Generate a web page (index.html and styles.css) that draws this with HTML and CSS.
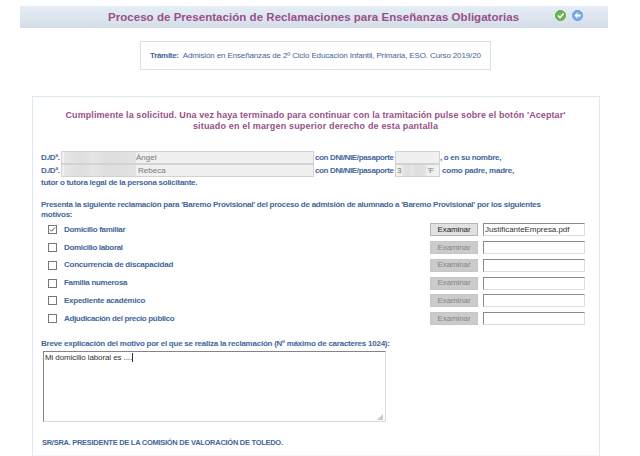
FILE: index.html
```html
<!DOCTYPE html>
<html lang="es">
<head>
    <meta charset="UTF-8">
    <meta name="viewport" content="width=device-width, initial-scale=1.0">
    <title>Reclamaciones</title>
    <link rel="stylesheet" href="styles.css">
</head>
<body>
    <header class="header">
        <h1>Proceso de Presentación de Reclamaciones para Enseñanzas Obligatorias</h1>
        <div class="header-actions">
            <svg width="11" height="11" viewBox="0 0 22 22">
                <circle cx="11" cy="11" r="10" fill="#6db356" stroke="#5fa54c" stroke-width="2"/>
                <path d="M6 11l4 4 7-8" fill="none" stroke="#fff" stroke-width="3.4"/>
            </svg>
            <svg width="11" height="11" viewBox="0 0 22 22">
                <circle cx="11" cy="11" r="10" fill="#79aeee" stroke="#6397dc" stroke-width="2"/>
                <path d="M5 11l6-6v4h6v4h-6v4z" fill="#fff"/>
            </svg>
        </div>
    </header>
    <div class="tramite"><b>Trámite:</b><span>Admisión en Enseñanzas de 2º Ciclo Educación Infantil, Primaria, ESO. Curso 2019/20</span></div>

    <form class="panel">
        <h2><span class="intro-1">Cumplimente la solicitud. Una vez haya terminado para continuar con la tramitación pulse sobre el botón 'Aceptar'</span><span class="intro-2">situado en el margen superior derecho de esta pantalla</span></h2>

        <div class="person">
            <span class="treat">D./Dª.</span>
            <div class="field name"><i class="mask"></i><span>Ángel</span></div>
            <span class="dni-label">con DNI/NIE/pasaporte</span>
            <div class="field dni"></div>
            <span class="after-1">, o en su nombre,</span>
        </div>
        <div class="person">
            <span class="treat">D./Dª.</span>
            <div class="field name second"><i class="mask"></i><span>Rebeca</span></div>
            <span class="dni-label">con DNI/NIE/pasaporte</span>
            <div class="field dni">3<i class="mask"></i>'F</div>
            <span class="after-2">como padre, madre,</span>
        </div>
        <p class="tutor">tutor o tutora legal de la persona solicitante.</p>
        <p class="presenta">Presenta la siguiente reclamación para 'Baremo Provisional' del proceso de admisión de alumnado a 'Baremo Provisional' por los siguientes<br>motivos:</p>

        <div class="reasons">
            <div class="reason">
                <svg class="check" viewBox="0 0 7 7"><path d="M1 3.5l1.7 1.7L6 1.5" fill="none" stroke="#444" stroke-width=".9"/></svg>
                <span class="r1">Domicilio familiar</span>
                <button type="button">Examinar</button>
                <div class="file">JustificanteEmpresa.pdf</div>
            </div>
            <div class="reason">
                <svg class="check"></svg>
                <span class="r2">Domicilio laboral</span>
                <button type="button" disabled>Examinar</button>
                <div class="file"></div>
            </div>
            <div class="reason">
                <svg class="check"></svg>
                <span class="r3">Concurrencia de discapacidad</span>
                <button type="button" disabled>Examinar</button>
                <div class="file"></div>
            </div>
            <div class="reason">
                <svg class="check"></svg>
                <span class="r4">Familia numerosa</span>
                <button type="button" disabled>Examinar</button>
                <div class="file"></div>
            </div>
            <div class="reason">
                <svg class="check"></svg>
                <span class="r5">Expediente académico</span>
                <button type="button" disabled>Examinar</button>
                <div class="file"></div>
            </div>
            <div class="reason">
                <svg class="check"></svg>
                <span class="r6">Adjudicación del precio público</span>
                <button type="button" disabled>Examinar</button>
                <div class="file"></div>
            </div>
        </div>

        <p class="explain">Breve explicación del motivo por el que se realiza la reclamación (Nº máximo de caracteres 1024):</p>
        <div class="textarea">
            <span>Mi domicilio laboral es ....</span><i class="caret"></i>
            <svg class="grip" width="6" height="6" viewBox="0 0 6 6"><path d="M6 0v6H0z" fill="#c9c9c9"/></svg>
        </div>
        <p class="president">SR/SRA. PRESIDENTE DE LA COMISIÓN DE VALORACIÓN DE TOLEDO.</p>
    </form>
</body>
</html>
```
FILE: styles.css
```css
* {
    box-sizing: border-box;
}
body {
    margin: 0;
    padding: 6px 32px 0 20px;
    height: 456px;
    overflow: hidden;
    background-color: #fff;
    font-family: "Liberation Sans", Arial, sans-serif;
    font-size: 8px;
    line-height: 10px;
    color: #45659a;
    white-space: nowrap;
}
h1, h2, p {
    margin: 0;
}
.header {
    display: flex;
    align-items: center;
    height: 22px;
    padding-left: 88px;
    background: linear-gradient(#e5edf6, #d5dde7);
}
.header h1 {
    width: 447px;
    font-size: 11.5px;
    line-height: 14px;
    letter-spacing: 0.04px;
    color: #985089;
}
.header-actions {
    display: flex;
    gap: 6px;
    margin-top: -3px;
}
.tramite {
    display: flex;
    align-items: center;
    gap: 4px;
    width: 351px;
    height: 29px;
    margin: 13px 0 0 120px;
    padding-left: 9px;
    border: 1px solid #d3e0ec;
    letter-spacing: -0.13px;
}
.tramite b {
    letter-spacing: -0.3px;
}
.panel {
    width: 568px;
    height: 360px;
    margin: 26px 0 0 12px;
    padding: 13px 0 0 8px;
    border: 1px solid #dde8f1;
    border-bottom-color: #f4f7fa;
}
h2 {
    display: flex;
    flex-direction: column;
    align-items: center;
    width: 549px;
    margin-bottom: 19px;
    font-size: 9px;
    line-height: 11px;
    color: #985089;
}
.intro-1 {
    letter-spacing: 0.09px;
}
.intro-2 {
    letter-spacing: 0.17px;
}
.person {
    display: flex;
    align-items: center;
    height: 13px;
    font-weight: bold;
    letter-spacing: -0.3px;
}
.treat {
    width: 20px;
    letter-spacing: -0.45px;
}
.field {
    display: flex;
    align-items: center;
    height: 13px;
    border: 1px solid #d2d2d2;
    background-color: #f0f0f0;
    color: #777;
    font-weight: normal;
    letter-spacing: 0;
}
.field.name {
    width: 253px;
    padding-left: 2px;
}
.mask {
    width: 72px;
    height: 11px;
    background: linear-gradient(90deg, #e7e7e7, #dedede 25%, #e6e6e6 40%, #dedede 60%, #e2e2e2);
}
.second span {
    margin-left: 2px;
}
.dni-label {
    width: 81px;
    padding-left: 1px;
    letter-spacing: -0.36px;
}
.field.dni {
    width: 45px;
    padding-left: 1px;
}
.dni .mask {
    width: 24px;
    margin: 0 1px;
}
.after-2 {
    margin-left: 2px;
    letter-spacing: -0.23px;
}
.tutor, .presenta, .explain, .president {
    font-weight: bold;
    letter-spacing: -0.26px;
}
.tutor {
    margin-top: 1px;
}
.presenta {
    margin-top: 12px;
}
.reasons {
    margin-top: 1px;
}
.reason {
    display: flex;
    align-items: center;
    height: 17.75px;
    padding-left: 7px;
}
.reason span {
    flex: none;
    width: 373px;
    padding-left: 7px;
    font-weight: bold;
}
.r1, .r4 {
    letter-spacing: -0.3px;
}
.r2, .r6 {
    letter-spacing: -0.34px;
}
.r3, .r5 {
    letter-spacing: -0.25px;
}
.check {
    flex: none;
    width: 9px;
    height: 9px;
    border: 1px solid #777;
    background-color: #fff;
}
.reason button {
    flex: none;
    width: 48px;
    height: 13px;
    padding: 0;
    border: 1px solid #b5b5b5;
    background-color: #e1e1e1;
    color: #222;
    font-family: inherit;
    font-size: 8px;
    line-height: 10px;
    letter-spacing: -0.1px;
}
.reason button:disabled {
    border-color: #c6c6c6;
    background-color: #cbcbcb;
    color: #858585;
}
.file {
    flex: none;
    width: 102px;
    height: 13px;
    margin-left: 5px;
    padding-left: 1px;
    border: 1px solid #dedede;
    border-top-color: #8b8b8b;
    border-left-color: #8b8b8b;
    line-height: 11px;
    letter-spacing: -0.04px;
    color: #333;
}
.explain {
    margin-top: 11px;
    letter-spacing: -0.24px;
}
.textarea {
    position: relative;
    display: flex;
    width: 343px;
    height: 71px;
    margin: 2px 0 0 2px;
    padding: 1px;
    border: 1px solid #d9d9d9;
    border-top-color: #858585;
    border-left-color: #858585;
    color: #333;
    letter-spacing: -0.1px;
}
.caret {
    width: 1px;
    height: 9px;
    background-color: #333;
}
.grip {
    position: absolute;
    right: 2px;
    bottom: 1px;
}
.president {
    margin: 16px 0 0 1px;
    font-size: 7.5px;
    letter-spacing: -0.28px;
}
```
